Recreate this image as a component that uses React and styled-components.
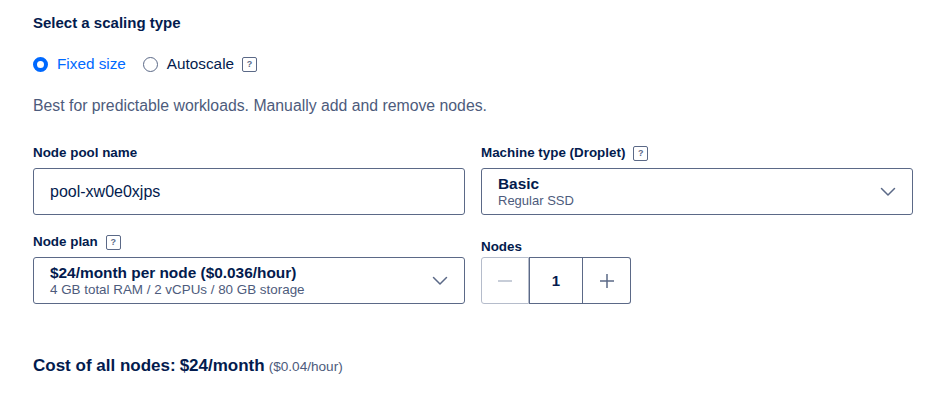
import React from "react";
import styled, { createGlobalStyle } from "styled-components";

const Global = createGlobalStyle`
  html, body { margin: 0; padding: 0; background: #fff; }
  body { font-family: "Liberation Sans", Arial, sans-serif; color: #031b4e; }
  * { box-sizing: border-box; }
`;

const Page = styled.div`
  padding: 14px 36px 0 33px;
  width: 949px;
`;

const Title = styled.h3`
  margin: 0;
  font-size: 15px;
  font-weight: 700;
  line-height: 18px;
  color: #031b4e;
`;

const RadioRow = styled.div`
  display: flex;
  align-items: center;
  margin-top: 23px;
  height: 18px;
`;

const RadioLabel = styled.label`
  display: flex;
  align-items: center;
  gap: 9px;
  font-size: 15.3px;
  color: ${(p) => (p.$active ? "#0069ff" : "#031b4e")};
  margin-right: ${(p) => p.$mr || 0}px;
`;

const RadioDot = styled.span`
  width: 15px;
  height: 15px;
  border-radius: 50%;
  border: ${(p) => (p.$checked ? "4px solid #0069ff" : "1px solid #5b6987")};
  background: #fff;
  flex: none;
`;

const Help = styled.span`
  display: inline-flex;
  align-items: center;
  justify-content: center;
  width: 15px;
  height: 15px;
  border: 1px solid #5b6987;
  border-radius: 2px;
  font-size: 9px;
  font-weight: 700;
  color: #5b6987;
  margin-left: ${(p) => p.$ml || 8}px;
  line-height: 1;
`;

const Desc = styled.p`
  margin: 24px 0 0;
  font-size: 15.8px;
  line-height: 18px;
  color: #4d5b7c;
`;

const Grid = styled.div`
  display: grid;
  grid-template-columns: 432px 432px;
  column-gap: 16px;
  row-gap: 19px;
  margin-top: 30px;
`;

const Field = styled.div`
  display: flex;
  flex-direction: column;
  justify-content: flex-end;
`;

const Label = styled.div`
  display: flex;
  align-items: center;
  font-size: 13.4px;
  font-weight: 700;
  line-height: 16px;
  margin-bottom: ${(p) => (p.$tight ? 2 : 7)}px;
  color: #031b4e;
`;

const Box = styled.div`
  height: 47px;
  border: 1px solid #5b6987;
  border-radius: 3px;
  display: flex;
  align-items: center;
  justify-content: space-between;
  padding: 0 16px;
`;

const InputText = styled.span`
  font-size: 16px;
  color: #031b4e;
`;

const SelectText = styled.div`
  display: flex;
  flex-direction: column;
`;

const Main = styled.span`
  font-size: 15.4px;
  font-weight: 700;
  line-height: 18px;
  color: #031b4e;
`;

const Sub = styled.span`
  font-size: ${(p) => p.$size || 13}px;
  line-height: 16px;
  color: #4d5b7c;
`;

const Stepper = styled.div`
  display: flex;
  height: 47px;
  width: 150px;
`;

const StepBtn = styled.div`
  width: ${(p) => p.$w}px;
  display: flex;
  align-items: center;
  justify-content: center;
  border: 1px solid ${(p) => (p.$disabled ? "#b5bccb" : "#5b6987")};
  border-left-width: ${(p) => (p.$first ? 1 : 0)}px;
  border-radius: ${(p) => p.$radius || 0};
  font-size: 15px;
  font-weight: 700;
  color: #031b4e;
`;

const Cost = styled.div`
  margin-top: 52px;
  display: flex;
  align-items: baseline;
  gap: 4px;
  font-size: 17px;
  font-weight: 600;
  color: #031b4e;
`;

const Strong = styled.strong`
  font-weight: 700;
`;

const Small = styled.span`
  font-size: 13.6px;
  font-weight: 400;
  color: #4d5b7c;
`;

const Chevron = () => (
  <svg width="16" height="10" viewBox="0 0 16 10" fill="none">
    <path d="M1.5 1.5 8 8l6.5-6.5" stroke="#5b6987" strokeWidth="1.5" strokeLinecap="round" strokeLinejoin="round" />
  </svg>
);

const Minus = () => (
  <svg width="14" height="14" viewBox="0 0 14 14">
    <path d="M0 7h14" stroke="#b5bccb" strokeWidth="1.5" />
  </svg>
);

const Plus = () => (
  <svg width="14" height="14" viewBox="0 0 14 14">
    <path d="M0 7h14M7 0v14" stroke="#5b6987" strokeWidth="1.5" />
  </svg>
);

export default function App() {
  return (
    <>
      <Global />
      <Page>
        <Title>Select a scaling type</Title>
        <RadioRow>
          <RadioLabel $active $mr={17}>
            <RadioDot $checked />
            Fixed size
          </RadioLabel>
          <RadioLabel>
            <RadioDot />
            Autoscale
          </RadioLabel>
          <Help>?</Help>
        </RadioRow>
        <Desc>Best for predictable workloads. Manually add and remove nodes.</Desc>
        <Grid>
          <Field>
            <Label>Node pool name</Label>
            <Box>
              <InputText>pool-xw0e0xjps</InputText>
            </Box>
          </Field>
          <Field>
            <Label>
              Machine type (Droplet)<Help>?</Help>
            </Label>
            <Box>
              <SelectText>
                <Main>Basic</Main>
                <Sub>Regular SSD</Sub>
              </SelectText>
              <Chevron />
            </Box>
          </Field>
          <Field>
            <Label>
              Node plan<Help>?</Help>
            </Label>
            <Box>
              <SelectText>
                <Main>$24/month per node ($0.036/hour)</Main>
                <Sub $size={13.4}>4 GB total RAM / 2 vCPUs / 80 GB storage</Sub>
              </SelectText>
              <Chevron />
            </Box>
          </Field>
          <Field>
            <Label $tight>Nodes</Label>
            <Stepper>
              <StepBtn $w={48} $first $disabled $radius="3px 0 0 3px">
                <Minus />
              </StepBtn>
              <StepBtn $w={54} $first>1</StepBtn>
              <StepBtn $w={48} $radius="0 3px 3px 0">
                <Plus />
              </StepBtn>
            </Stepper>
          </Field>
        </Grid>
        <Cost>
          Cost of all nodes: <Strong>$24/month</Strong> <Small>($0.04/hour)</Small>
        </Cost>
      </Page>
    </>
  );
}
